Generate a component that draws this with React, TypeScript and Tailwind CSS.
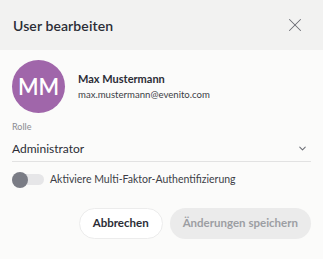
import { X, ChevronDown } from 'lucide-react'

export default function App() {
  return (
    <div className="w-[323px] h-[259px] bg-[#fbfbfa] font-['Lato',sans-serif] text-[#2b2d36]">
      {/* Header */}
      <div className="h-[50px] bg-[#f2f2f1] flex items-center justify-between pl-[13px] pr-[17px]">
        <h2 className="text-[14px] font-semibold tracking-[0.1px]">User bearbeiten</h2>
        <X className="w-[22px] h-[22px] text-[#6b6d75]" strokeWidth={1.1} />
      </div>

      <div className="px-3 pt-[10px]">
        {/* User */}
        <div className="flex items-center gap-[13px]">
          <div className="w-[53px] h-[53px] rounded-full bg-[#a066aa] flex items-center justify-center text-white text-[22px] font-semibold">
            MM
          </div>
          <div className="leading-tight">
            <div className="text-[11px] font-bold">Max Mustermann</div>
            <div className="text-[9.6px] text-[#3c3e46] mt-[3px]">max.mustermann@evenito.com</div>
          </div>
        </div>

        {/* Rolle */}
        <div className="mt-[7px]">
          <div className="text-[9px] text-[#8a8c92]">Rolle</div>
          <div className="flex items-center justify-between h-[25px] mt-[3px] border-b border-[#e2e2e2]">
            <span className="text-[12px]">Administrator</span>
            <ChevronDown className="w-[11px] h-[11px] text-[#6b6d75] mr-[3px]" strokeWidth={2.2} />
          </div>
        </div>

        {/* MFA */}
        <div className="flex items-center gap-[6px] mt-[10px]">
          <div className="relative w-[32px] h-[16px] flex items-center">
            <div className="w-[32px] h-[11px] rounded-full bg-[#e6e6e8]" />
            <div className="absolute left-0 w-[16px] h-[16px] rounded-full bg-[#7a7c85]" />
          </div>
          <span className="text-[10.5px] text-[#3c3e46]">Aktiviere Multi-Faktor-Authentifizierung</span>
        </div>

        {/* Actions */}
        <div className="flex justify-end gap-[7px] mt-[20px]">
          <button className="h-[31px] px-[13px] rounded-full bg-white border border-[#ececec] text-[11.5px] font-bold">
            Abbrechen
          </button>
          <button className="h-[31px] px-[13px] rounded-full bg-[#ebebeb] text-[11.5px] font-bold text-[#9c9ea3]">
            Änderungen speichern
          </button>
        </div>
      </div>
    </div>
  )
}
